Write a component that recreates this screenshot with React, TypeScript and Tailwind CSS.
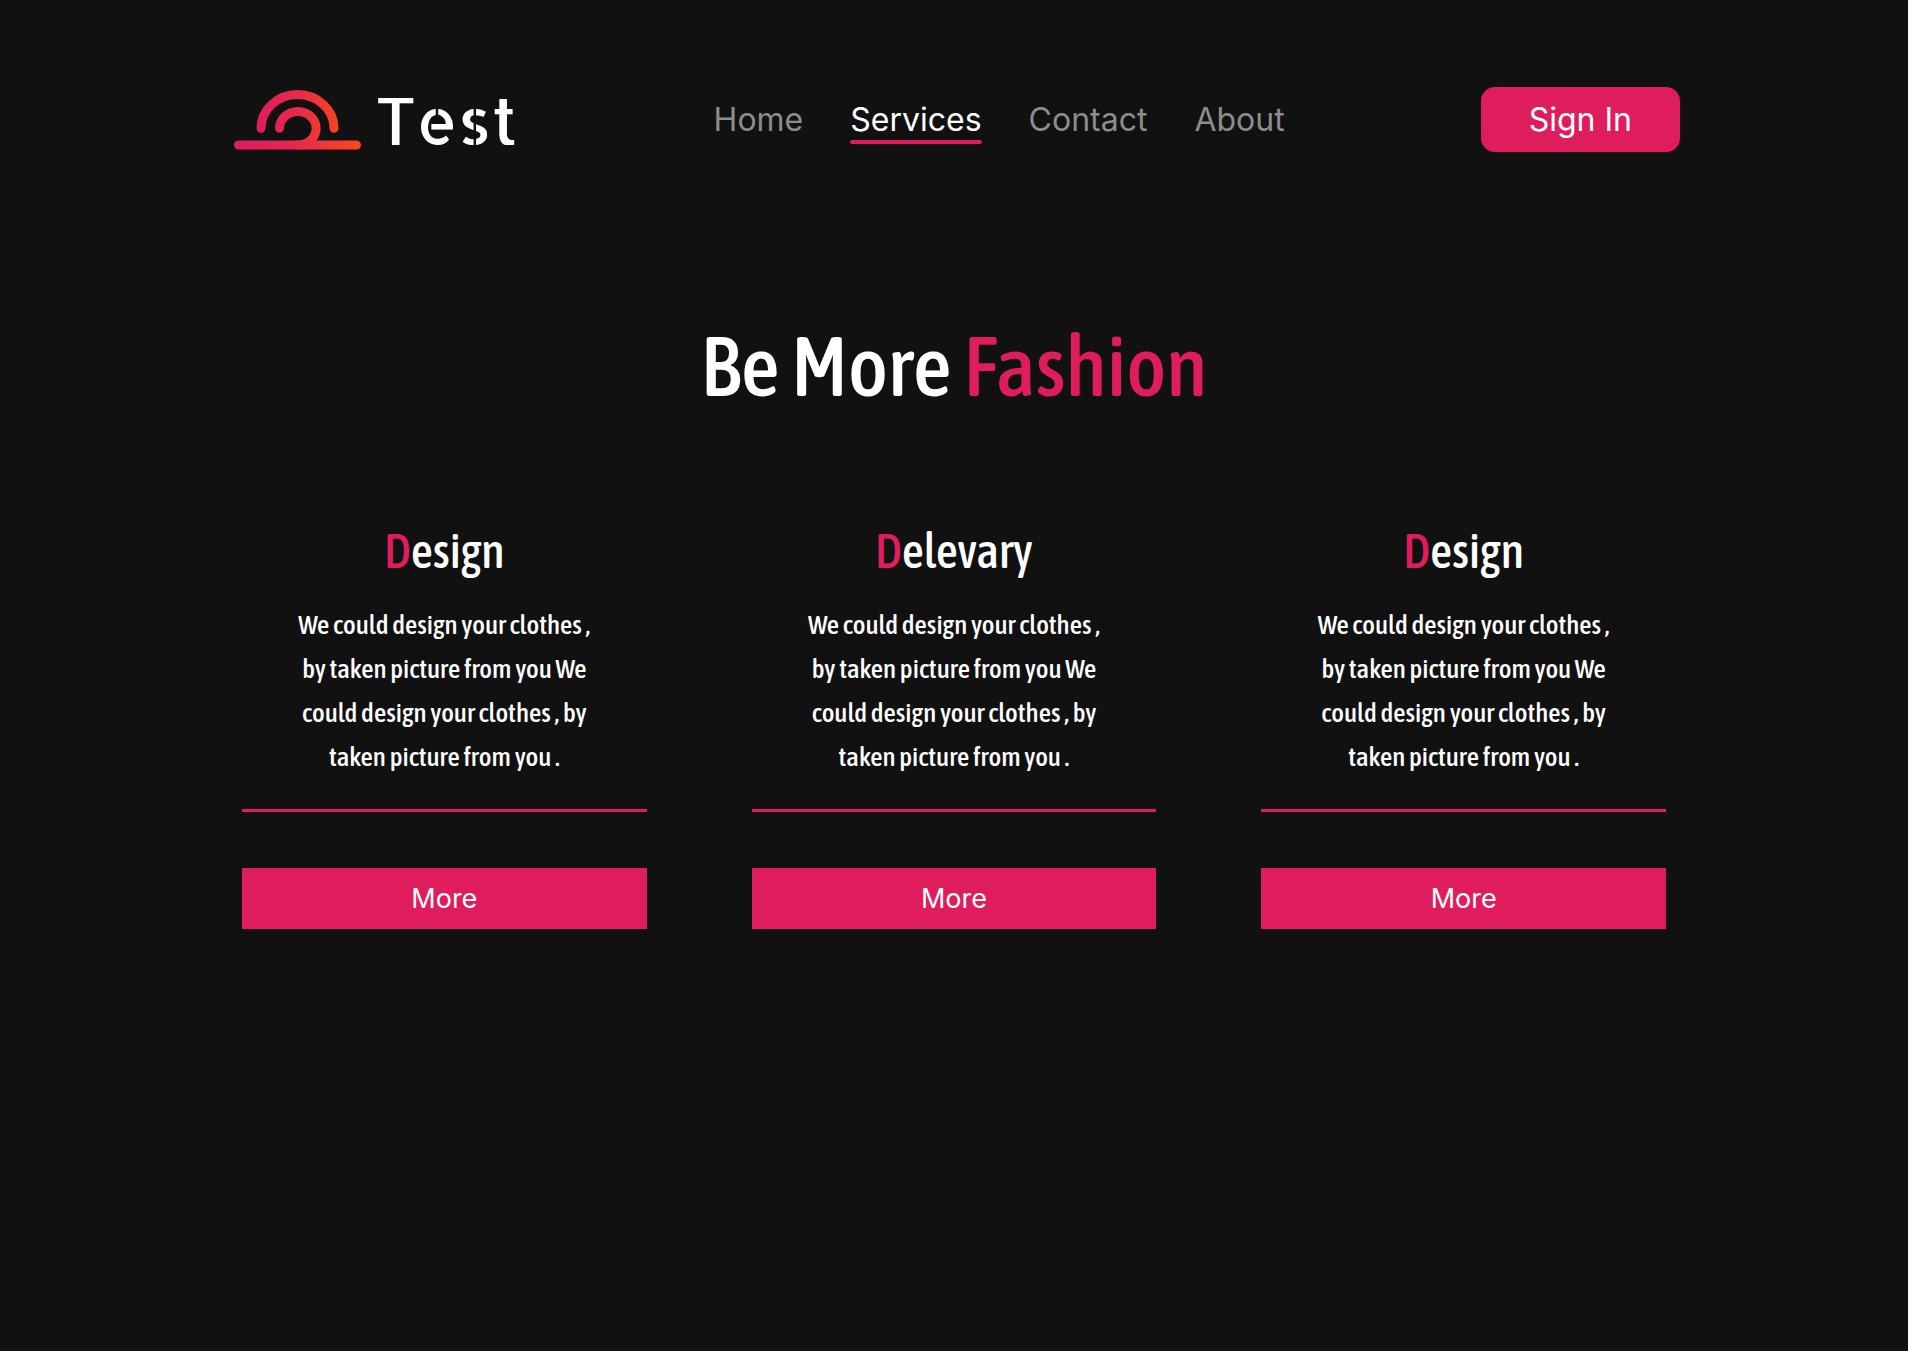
const navItems = [
  { label: 'Home', active: false },
  { label: 'Services', active: true },
  { label: 'Contact', active: false },
  { label: 'About', active: false },
];

const description =
  'We could design your clothes , by taken picture from you We could design your clothes , by taken picture from you .';

const services = [
  { id: 'design', initial: 'D', rest: 'esign' },
  { id: 'delivery', initial: 'D', rest: 'elevary' },
  { id: 'design-extra', initial: 'D', rest: 'esign' },
];

function Logo() {
  return (
    <svg width="127" height="60" viewBox="0 0 127 60" fill="none" aria-hidden="true">
      <defs>
        <linearGradient id="sunrise" gradientUnits="userSpaceOnUse" x1="0" y1="0" x2="127" y2="0">
          <stop offset="0" stopColor="#df1c5d" />
          <stop offset="0.45" stopColor="#e32753" />
          <stop offset="1" stopColor="#fb471d" />
        </linearGradient>
        <linearGradient id="arc" gradientUnits="userSpaceOnUse" x1="22" y1="0" x2="105" y2="0">
          <stop offset="0" stopColor="#df1c5d" />
          <stop offset="0.5" stopColor="#e52b4c" />
          <stop offset="1" stopColor="#f7441f" />
        </linearGradient>
      </defs>
      <g strokeWidth="9" strokeLinecap="round">
        <path d="M27 38.200A36.500 33.600 0 0 1 100 38.200" stroke="url(#arc)" />
        <path d="M45.500 38.200A18.300 16.800 0 1 1 63.800 55" stroke="url(#arc)" />
        <path d="M4.500 55H122.500" stroke="url(#sunrise)" />
      </g>
    </svg>
  );
}

function Header() {
  return (
    <header className="flex items-center justify-between pr-0.5 pl-2">
      <a href="#home" className="flex items-center gap-[14px]">
        <Logo />
        <span className="font-['Allerta_Stencil','Lato',sans-serif] text-[64px] leading-none">Test</span>
      </a>
      <nav className="flex gap-[47px] text-[32px] leading-10 font-[380]">
        {navItems.map((item) =>
          item.active ? (
            <a key={item.label} href="#services" aria-current="page" className="relative text-white">
              {item.label}
              <span className="absolute inset-x-0 -bottom-1 h-1 rounded-full bg-[#df1d5c]" />
            </a>
          ) : (
            <a key={item.label} href={`#${item.label.toLowerCase()}`} className="text-[#8c8c8c]">
              {item.label}
            </a>
          ),
        )}
      </nav>
      <button type="button" className="rounded-[14px] bg-[#df1d5c] px-12 py-3 text-[32px] leading-[41px] font-[380]">
        Sign In
      </button>
    </header>
  );
}

function ServiceCard({ initial, rest }: { initial: string; rest: string }) {
  return (
    <article className="flex flex-col text-center">
      <div className="border-b-[3px] border-[#df1d5c] px-14 pb-[30px] font-['Asap_Condensed',sans-serif] font-medium">
        <h2 className="text-[48px] leading-[56px]">
          <span className="text-[#df1d5c]">{initial}</span>
          {rest}
        </h2>
        <p className="mt-6 text-[27px] leading-[44px]">{description}</p>
      </div>
      <button type="button" className="mt-14 bg-[#df1d5c] py-3 text-[27px] leading-[37px] font-[380]">
        More
      </button>
    </article>
  );
}

export default function App() {
  return (
    <div className="min-h-screen bg-[#111111] font-['Inter',sans-serif] text-white">
      <div className="mx-auto w-full max-w-[1456px] pt-[87px]">
        <Header />
        <main className="px-4 pb-20">
          <h1 className="mt-[164px] text-center font-['Asap_Condensed',sans-serif] text-[85px] leading-[100px] font-medium">
            Be More <span className="text-[#df1d5c]">Fashion</span>
          </h1>
          <section className="mt-[107px] grid grid-cols-3 gap-x-[105px]">
            {services.map((service) => (
              <ServiceCard key={service.id} initial={service.initial} rest={service.rest} />
            ))}
          </section>
        </main>
      </div>
    </div>
  );
}
